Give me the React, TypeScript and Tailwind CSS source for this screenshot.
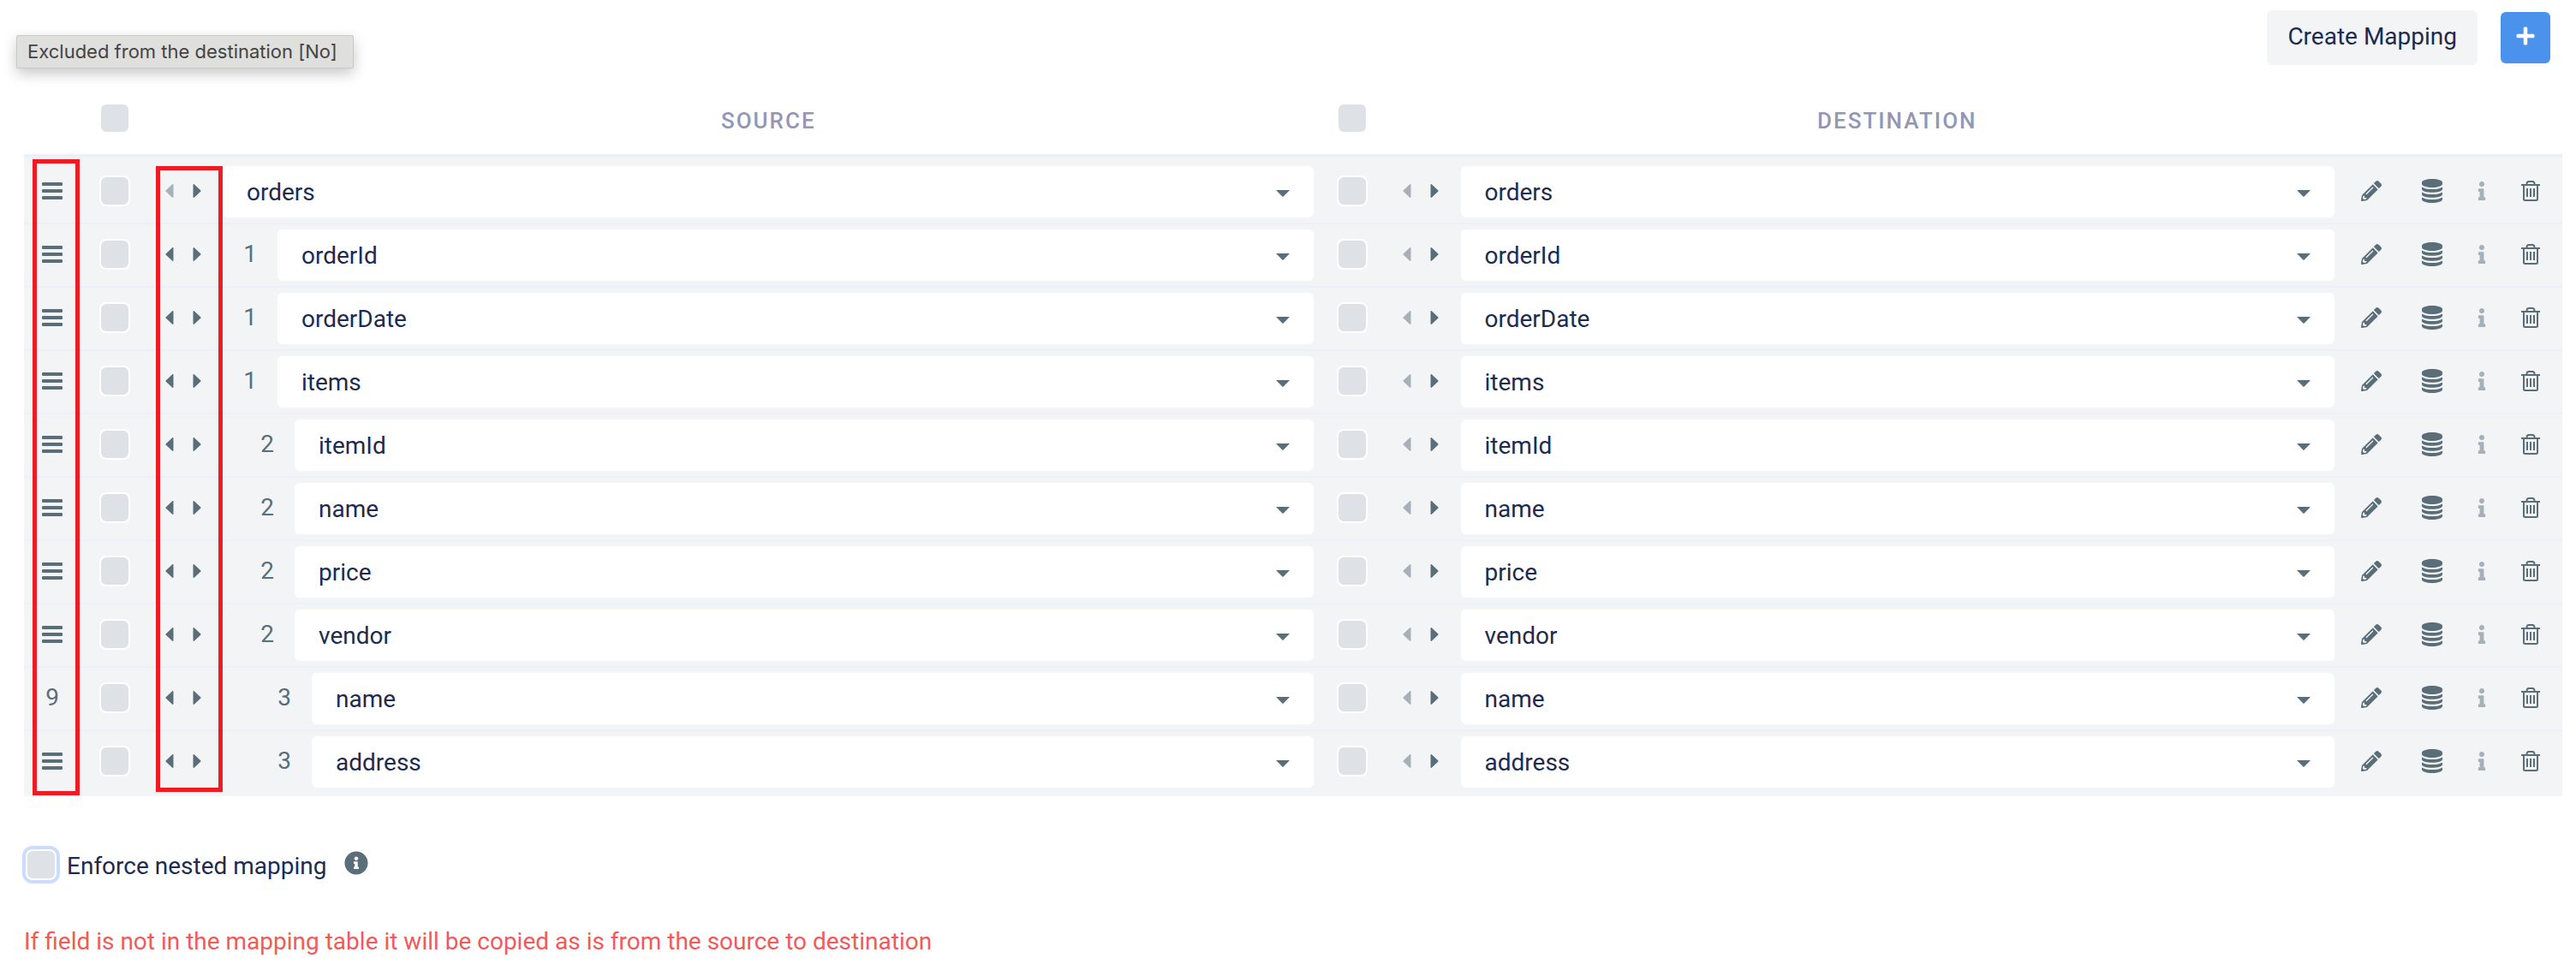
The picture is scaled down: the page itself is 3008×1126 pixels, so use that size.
import React from "react";
import { FaInfo, FaInfoCircle, FaPencilAlt, FaPlus } from "react-icons/fa";

type Row = { name: string; level: number; showIndex?: boolean };

const rows: Row[] = [
  { name: "orders", level: 0 },
  { name: "orderId", level: 1 },
  { name: "orderDate", level: 1 },
  { name: "items", level: 1 },
  { name: "itemId", level: 2 },
  { name: "name", level: 2 },
  { name: "price", level: 2 },
  { name: "vendor", level: 2 },
  { name: "name", level: 3, showIndex: true },
  { name: "address", level: 3 },
];

const indents = ["", "", "ml-5", "ml-10"];

function MenuIcon() {
  return (
    <svg viewBox="0 0 24 20" className="h-5 w-6" fill="currentColor" aria-hidden="true">
      <rect width="24" height="4" rx="1" />
      <rect y="8" width="24" height="4" rx="1" />
      <rect y="16" width="24" height="4" rx="1" />
    </svg>
  );
}

function ArrowIcon({ flip = false }: { flip?: boolean }) {
  return (
    <svg viewBox="0 0 10 16" className="h-4 w-2.5" fill="currentColor" aria-hidden="true">
      <path d={flip ? "M9.5 1v14c0 1-.9 1.200-1.500.6L.8 8.800c-.5-.5-.5-1.100 0-1.600L8 .4c.6-.6 1.500-.4 1.500.6z" : "M.5 1v14c0 1 .9 1.200 1.500.6l7.200-6.800c.5-.5.5-1.100 0-1.600L2 .4C1.400-.2.5 0 .5 1z"} />
    </svg>
  );
}

function DatabaseIcon() {
  return (
    <svg viewBox="0 0 24 28" className="h-7 w-6" fill="currentColor" aria-hidden="true">
      <path d="M12 0C5.500 0 0 1.700 0 4v2c0 2.300 5.500 4 12 4s12-1.700 12-4V4c0-2.300-5.500-4-12-4z" />
      <path d="M0 9.400c2.200 1.700 6.800 2.600 12 2.600s9.800-.9 12-2.600V12c0 2.200-5.500 3.800-12 3.800S0 14.200 0 12z" />
      <path d="M0 15.400C2.200 17.100 6.800 18 12 18s9.800-.9 12-2.600V18c0 2.200-5.500 3.800-12 3.800S0 20.200 0 18z" />
      <path d="M0 21.400C2.200 23.100 6.800 24 12 24s9.800-.9 12-2.600V24c0 2.300-5.500 4-12 4S0 26.300 0 24z" />
    </svg>
  );
}

function TrashIcon() {
  return (
    <svg viewBox="0 0 22 24" className="h-6 w-[22px]" fill="none" stroke="currentColor" strokeWidth="2" aria-hidden="true">
      <path d="M0 5h22M6.500 5V4c0-2 1-3 2.500-3h4c1.500 0 2.500 1 2.500 3v1M3 5v16.500c0 1 .5 1.500 1.500 1.500h13c1 0 1.500-.5 1.500-1.500V5M7 9v10M11 9v10M15 9v10" />
    </svg>
  );
}

function Check({ label, id, focused = false }: { label?: string; id?: string; focused?: boolean }) {
  return (
    <input
      type="checkbox"
      id={id}
      aria-label={label}
      className={
        "block size-9 shrink-0 appearance-none rounded-lg border-2 border-white bg-[#dee2e7] checked:bg-[#4a92ec] " +
        (focused ? "ring-4 ring-[#cbdcfe]" : "")
      }
    />
  );
}

function FieldSelect({ value, label }: { value: string; label: string }) {
  return (
    <div className="relative min-w-0 flex-1">
      <select
        aria-label={label}
        defaultValue={value}
        className="block h-15 w-full appearance-none rounded-md bg-white pt-0.5 pr-16 pl-7 text-[28px] leading-8 text-[#1c2b4f]"
      >
        <option>{value}</option>
      </select>
      <svg viewBox="0 0 16 8" className="pointer-events-none absolute top-7 right-7 h-2 w-4 text-[#5a6e79]" fill="currentColor" aria-hidden="true">
        <path d="M0 0h16L8.700 7.500c-.4.400-1 .4-1.400 0z" />
      </svg>
    </div>
  );
}

function Arrows({ leftDisabled, side }: { leftDisabled: boolean; side: string }) {
  return (
    <div className="mb-0.5 flex">
      <button type="button" aria-label={`Move ${side} left`} disabled={leftDisabled} className="flex h-9 w-8 items-center justify-center disabled:opacity-50">
        <ArrowIcon flip />
      </button>
      <button type="button" aria-label={`Move ${side} right`} className="flex h-9 w-8 items-center justify-center">
        <ArrowIcon />
      </button>
    </div>
  );
}

function MappingRow({ row, index }: { row: Row; index: number }) {
  const cell =
    index === 0
      ? "h-20 border-t-4 border-[#edf0f8] pt-1"
      : index === rows.length - 1
        ? "h-[78px] border-t-2 border-[#edf0f8] pb-1"
        : "h-[74px] border-t-2 border-[#edf0f8]";
  return (
    <tr>
      <td className={cell}>
        <button type="button" aria-label={`Row ${index + 1}`} className="mx-auto mb-0.5 flex h-9 w-10 items-center justify-center">
          {row.showIndex ? index + 1 : <MenuIcon />}
        </button>
      </td>
      <td className={cell}>
        <div className="mb-0.5 flex justify-center">
          <Check label={`Select source ${row.name}`} />
        </div>
      </td>
      <td className={`${cell} pl-2`}>
        <Arrows side="source" leftDisabled={row.level === 0} />
      </td>
      <td className={`${cell} pr-px`}>
        <div className={`flex items-center ${indents[row.level]}`}>
          {row.level > 0 && <span className="mb-0.5 w-16 text-center">{row.level}</span>}
          <FieldSelect value={row.name} label="Source field" />
        </div>
      </td>
      <td className={cell}>
        <div className="mb-0.5 flex justify-center">
          <Check label={`Select destination ${row.name}`} />
        </div>
      </td>
      <td className={`${cell} pl-1`}>
        <Arrows side="destination" leftDisabled />
      </td>
      <td className={`${cell} pl-px`}>
        <div className="flex">
          <FieldSelect value={row.name} label="Destination field" />
        </div>
      </td>
      <td className={cell}>
        <div className="mb-0.5 grid h-9 grid-cols-[86px_56px_60px_54px] items-center justify-items-center">
          <button type="button" aria-label="Edit"><FaPencilAlt className="size-6" /></button>
          <button type="button" aria-label="Lookup"><DatabaseIcon /></button>
          <button type="button" aria-label="Info" disabled className="opacity-50"><FaInfo className="size-[22px]" /></button>
          <button type="button" aria-label="Delete"><TrashIcon /></button>
        </div>
      </td>
    </tr>
  );
}

export default function App() {
  const heading = "text-[26px] leading-8 font-medium tracking-[2px] text-[#9297b6]";
  return (
    <div className="relative bg-white font-[Roboto,sans-serif] text-[28px] leading-8 text-[#1c2b4f]">
      <div role="tooltip" className="absolute top-[41px] left-[19px] w-[394px] rounded-xs border border-[#c9c9c8] bg-[#dfdfdd] px-3 font-[Inter,sans-serif] text-[22px] leading-[37px] text-[#444] shadow-[0_6px_16px_rgba(0,0,0,0.22)]">
        Excluded from the destination [No]
      </div>

      <header className="flex h-24 items-start justify-end gap-[27px] pt-3 pr-[30px]">
        <button type="button" className="h-16 rounded-md bg-[#f3f4f6] px-6 pb-0.5">Create Mapping</button>
        <button type="button" aria-label="Add mapping" className="mt-0.5 flex h-15 w-[58px] items-center justify-center rounded-md bg-[#4a92ec] pb-1 text-white">
          <FaPlus className="size-6" />
        </button>
      </header>

      <main className="pr-4 pl-7">
        <div className="relative">
          <table className="w-full table-fixed border-separate border-spacing-0">
            <colgroup>
              <col className="w-[66px]" />
              <col className="w-20" />
              <col className="w-[86px]" />
              <col className="w-[43%]" />
              <col className="w-[88px]" />
              <col className="w-[82px]" />
              <col />
              <col className="w-[266px]" />
            </colgroup>
            <thead>
              <tr className="h-21">
                <td />
                <th><div className="flex justify-center"><Check label="Select all sources" /></div></th>
                <td />
                <th className={heading}><div className="pt-1.5">SOURCE</div></th>
                <th><div className="flex justify-center"><Check label="Select all destinations" /></div></th>
                <td />
                <th className={heading}><div className="pt-1.5">DESTINATION</div></th>
                <td />
              </tr>
            </thead>
            <tbody className="bg-[#f3f4f6] text-[#5a6e79]">
              {rows.map((row, i) => (
                <MappingRow key={i} row={row} index={i} />
              ))}
            </tbody>
          </table>
          <div className="pointer-events-none absolute top-[90px] bottom-px left-2.5 w-[55px] border-5 border-[#ed1c24]" />
          <div className="pointer-events-none absolute top-[98px] bottom-[5px] left-[154px] w-[78px] border-5 border-[#ed1c24]" />
        </div>

        <div className="flex items-center pt-[62px] pl-0.5">
          <Check id="enforce" focused />
          <label htmlFor="enforce" className="pt-1 pl-3">Enforce nested mapping</label>
          <FaInfoCircle className="mb-1 ml-5 size-7 text-[#5a6e79]" />
        </div>
        <p className="pt-14 text-[#f05a5a]">
          If field is not in the mapping table it will be copied as is from the source to destination
        </p>
      </main>
    </div>
  );
}
